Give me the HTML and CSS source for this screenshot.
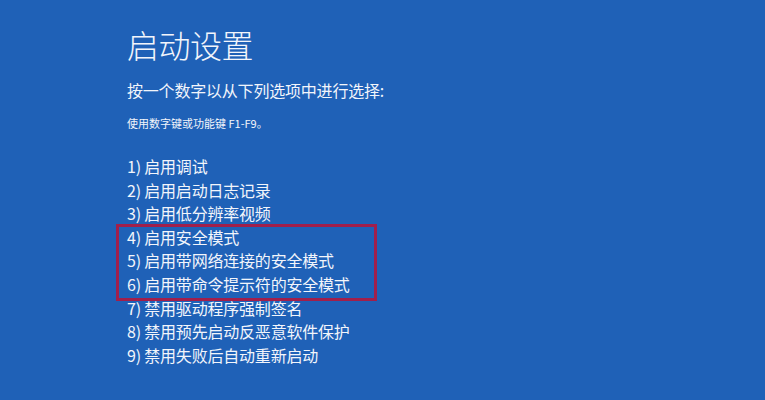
FILE: index.html
```html
<!DOCTYPE html>
<html lang="zh-CN">
<head>
<meta charset="utf-8">
<title>启动设置</title>
<link rel="stylesheet" href="styles.css">
</head>
<body>
<main class="screen">
  <h1 class="title">启动设置</h1>
  <p class="subtitle">按一个数字以从下列选项中进行选择:</p>
  <p class="hint">使用数字键或功能键 F1-F9。</p>
  <ol class="options">
    <li>1) 启用调试</li>
    <li>2) 启用启动日志记录</li>
    <li>3) 启用低分辨率视频</li>
    <li class="group">
      <ol class="options">
        <li>4) 启用安全模式</li>
        <li>5) 启用带网络连接的安全模式</li>
        <li>6) 启用带命令提示符的安全模式</li>
      </ol>
    </li>
    <li>7) 禁用驱动程序强制签名</li>
    <li>8) 禁用预先启动反恶意软件保护</li>
    <li>9) 禁用失败后自动重新启动</li>
  </ol>
</main>
</body>
</html>
```
FILE: styles.css
```css
html, body {
  margin: 0;
  padding: 0;
  background: #1f61b7;
}
body {
  width: 765px;
  height: 400px;
  overflow: hidden;
  font-family: "Noto Sans CJK SC", "Noto Sans", sans-serif;
  color: #f2f5fb;
}
.screen {
  padding: 24px 0 0 127px;
}
.title {
  margin: 0;
  font-size: 32px;
  line-height: 40px;
  font-weight: 300;
  letter-spacing: -0.5px;
}
.subtitle {
  margin: 16px 0 0;
  font-size: 16px;
  line-height: 20px;
  font-weight: 400;
  letter-spacing: -0.2px;
}
.hint {
  margin: 16px 0 0;
  font-size: 11px;
  line-height: 14px;
}
.options {
  list-style: none;
  margin: 25px 0 0;
  padding: 0;
  font-size: 16px;
  line-height: 23.6px;
  letter-spacing: -0.2px;
}
.group .options {
  margin: 0;
}
.group {
  position: relative;
}
.group::after {
  content: "";
  position: absolute;
  left: -11px;
  top: -2px;
  bottom: -4px;
  width: 255px;
  border: 3px solid #a11f4b;
}
```
